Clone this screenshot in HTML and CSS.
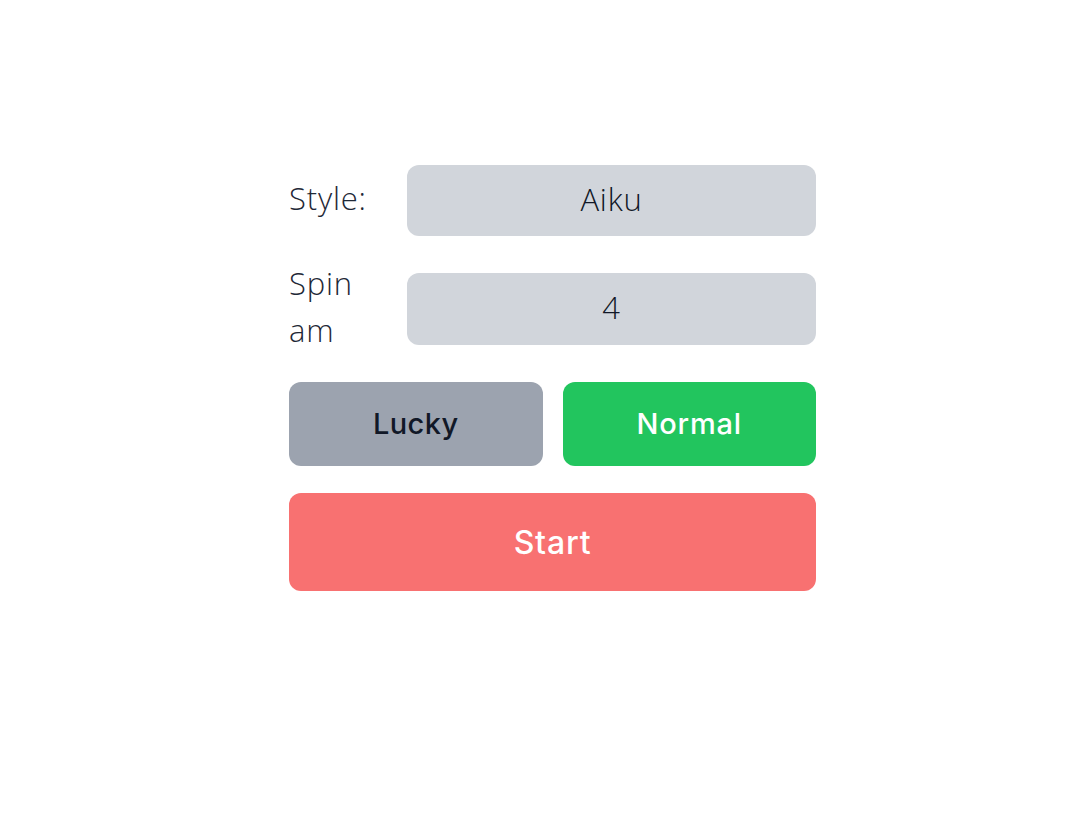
FILE: index.html
```html
<!DOCTYPE html>
<html lang="en">
<head>
<meta charset="utf-8">
<title>Spin</title>
<link rel="stylesheet" href="styles.css">
</head>
<body>
<main class="panel">
  <div class="row">
    <label class="label">Style:</label>
    <div class="field">Aiku</div>
  </div>
  <div class="row">
    <label class="label">Spin am</label>
    <div class="field">4</div>
  </div>
  <div class="modes">
    <button class="btn btn-lucky">Lucky</button>
    <button class="btn btn-normal">Normal</button>
  </div>
  <button class="btn btn-start">Start</button>
</main>
</body>
</html>
```
FILE: styles.css
```css
html, body {
  margin: 0;
  padding: 0;
  background: #ffffff;
}
body {
  font-family: "Open Sans", "Liberation Sans", sans-serif;
  color: #1f2937;
}
.panel {
  width: 527px;
  margin: 165px 0 0 289px;
  display: flex;
  flex-direction: column;
  gap: 26px;
}
.row {
  display: flex;
  align-items: center;
  gap: 22px;
}
.label {
  width: 96px;
  flex: none;
  font-size: 31px;
  font-weight: 300;
  letter-spacing: 0.8px;
  line-height: 47px;
  margin: -2px 0 2px;
  color: #1f2937;
}
.field {
  flex: 1;
  height: 71px;
  box-sizing: border-box;
  padding-bottom: 4px;
  border-radius: 12px;
  background: #d1d5db;
  display: flex;
  align-items: center;
  justify-content: center;
  font-size: 31px;
  font-weight: 300;
  letter-spacing: 0.8px;
  color: #111827;
}
.row + .row .field {
  height: 72px;
}
.modes {
  display: grid;
  grid-template-columns: 1fr 1fr;
  gap: 20px;
}
.btn {
  border: none;
  border-radius: 12px;
  font-family: "Inter", "Open Sans", sans-serif;
  font-size: 29px;
  font-weight: 500;
  letter-spacing: 0.4px;
  display: flex;
  align-items: center;
  justify-content: center;
  padding: 0 0 2px;
}
.modes .btn {
  height: 84px;
}
.btn-lucky {
  background: #9ca3af;
  color: #111827;
}
.btn-normal {
  background: #22c55e;
  color: #ffffff;
  letter-spacing: 0.8px;
}
.btn-start {
  height: 98px;
  background: #f87171;
  color: #ffffff;
  font-size: 32px;
  letter-spacing: 0.8px;
  margin-top: 1px;
  padding: 0;
}
```
